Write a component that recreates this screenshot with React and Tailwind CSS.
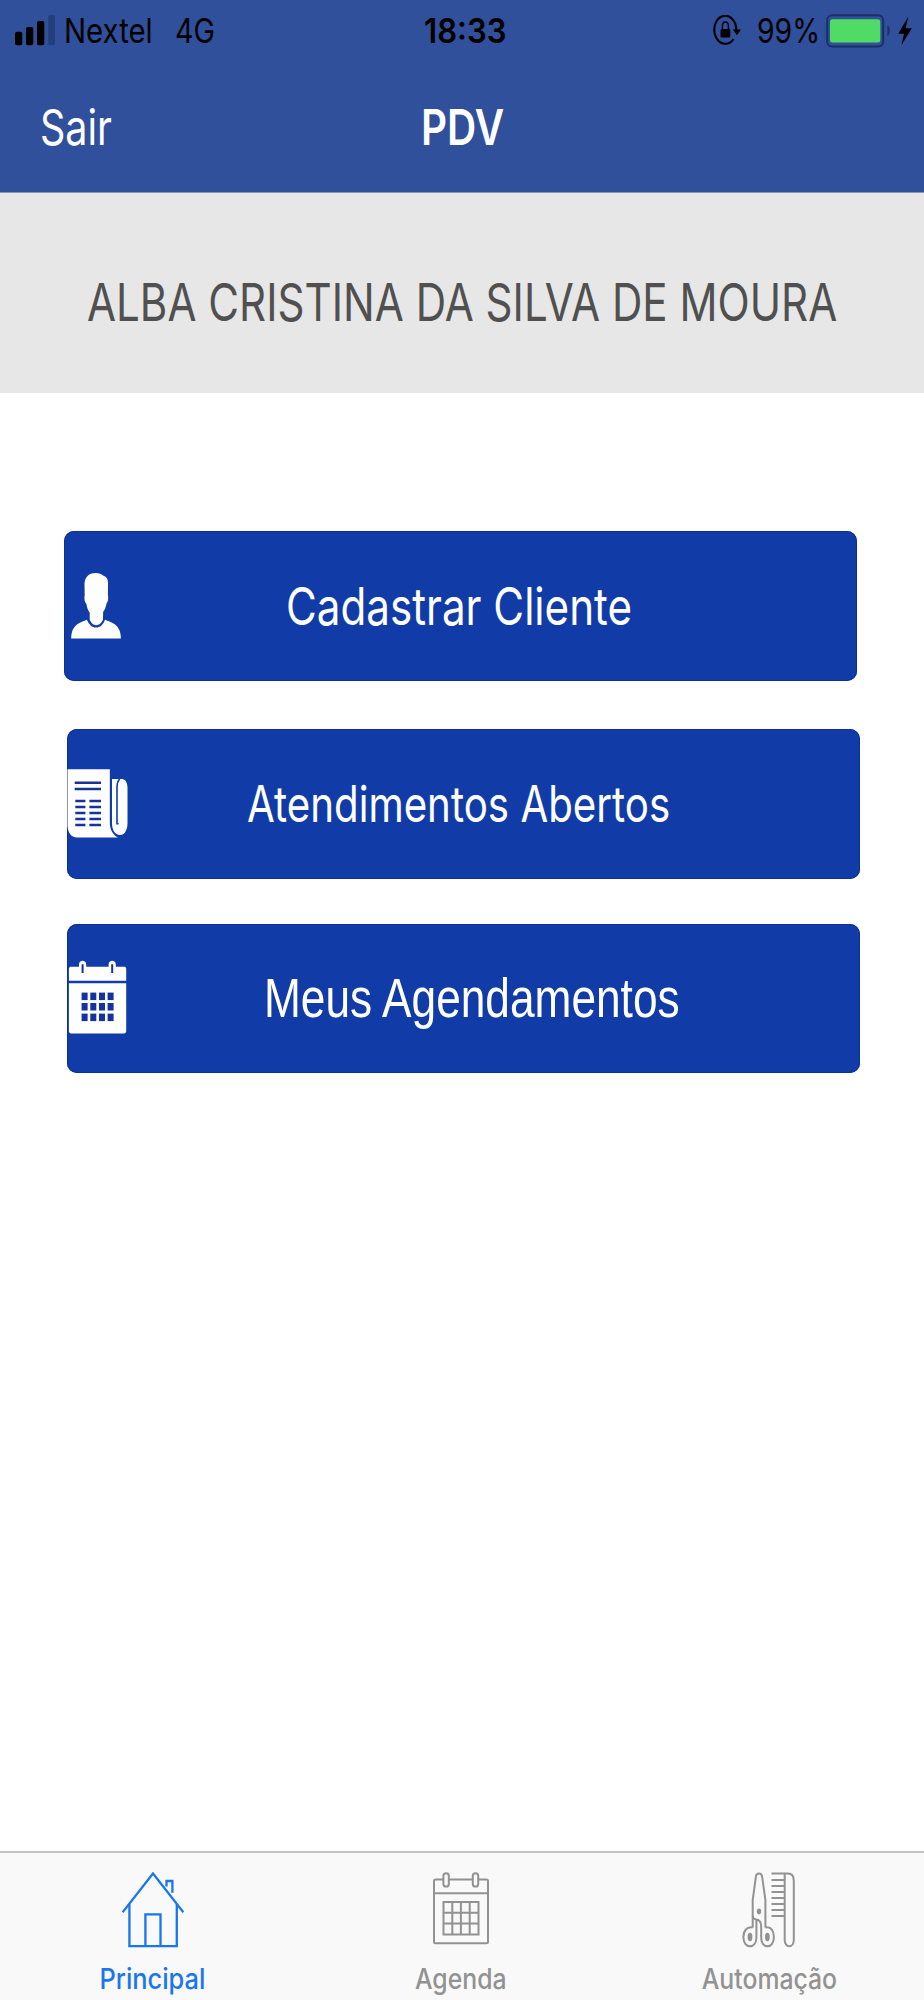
import React, { useState } from 'react';

const SignalIcon = () => (
  <svg className="shrink-0" width="40" height="32" viewBox="0 0 40 32">
    <rect x="0" y="16.7" width="7.3" height="13.5" rx="2" fill="#000" />
    <rect x="11" y="12" width="7.3" height="18.2" rx="2" fill="#000" />
    <rect x="22" y="6" width="7.3" height="24.2" rx="2" fill="#000" />
    <rect x="33.2" y="0" width="7" height="30.2" rx="2" fill="#253f7c" />
  </svg>
);

const RotationLockIcon = () => (
  <svg className="shrink-0" width="28" height="32" viewBox="0 0 28 32">
    <path d="M20.6 24A11 14 0 1 1 23.3 15" fill="none" stroke="#000" strokeWidth="2.1" />
    <path d="M19.8 14.6H28L24 20.3Z" fill="#000" />
    <rect x="7.5" y="14" width="9.8" height="8.6" rx="1" fill="#000" />
    <path d="M9.4 14.5V11C9.4 5.6 15.4 5.6 15.4 11V14.5" fill="none" stroke="#000" strokeWidth="1.4" />
  </svg>
);

const BatteryIcon = () => (
  <svg className="shrink-0" width="64" height="34" viewBox="0 0 64 34">
    <rect x="1.2" y="1.2" width="56" height="31.2" rx="5" fill="none" stroke="#1c2f60" strokeWidth="2" />
    <rect x="4" y="5.2" width="50.3" height="23.2" rx="2.5" fill="#4fdb64" />
    <path d="M61.3 11C65 12.5 65 20.5 61.3 22.3Z" fill="#1f356b" />
  </svg>
);

const BoltIcon = () => (
  <svg className="ml-2 shrink-0" width="14" height="30" viewBox="0 0 14 30">
    <path d="M10.3 .5L.3 17.7H6L3.4 29.2L13.8 12.3H7.7Z" fill="#000" />
  </svg>
);

const PersonIcon = () => (
  <svg className="ml-[7px] shrink-0" width="50" height="66" viewBox="0 0 50 66" fill="#fff">
    <path d="M24.7 0C17.5 0 13.3 4.5 13.5 12L13.7 22C13 25 13.4 29 15.4 31C16 35 17.2 37.5 18.7 39.5V46.3C19.5 49.5 22.3 52.3 25.2 52.3C28.2 52.3 31.2 49.5 32 46.3L32.1 39C34 36.5 35 33.5 35.5 30.5C37.2 28.5 37.6 25 36.9 22L37 10C37 6 35.5 3.8 32.5 2.8C30.5 .9 28 0 24.7 0Z" />
    <path d="M.2 65.6C.2 59 2.2 54.3 6 51.5C9 49.3 13 48 15.9 46.7C18 51.5 21 54.6 25 54.6C29.2 54.6 32.3 51.5 34 46.7C37 48 41 49 44 51.5C48 54.7 49.9 59 49.9 65.6Z" />
  </svg>
);

const NewspaperIcon = () => (
  <svg className="shrink-0" width="61" height="70" viewBox="0 0 61 70">
    <path d="M.5 .3H42.8V53C42.8 61 46 66 51 68.5H10C4 68.5 .5 63 .5 56Z" fill="#fff" />
    <path d="M45 10H52.2C53.5 9.8 54.5 10 55.5 10C58.8 10.7 60.5 14 60.5 19V54C60.5 61.5 57.5 66 53 66C48 66 45 61 45 54Z" fill="#fff" />
    <path d="M52.6 10C50.8 12 50 14.5 50 18V54.8H51.6" fill="none" stroke="#113ca8" strokeWidth="1.6" />
    <path
      d="M7.7 13.8H34M7.7 20H34M8.3 32H18.4M22.4 32H34M8.3 38.1H18.4M22.4 38.1H34M8.3 44H18.4M22.4 44H34M8.3 50H18.4M22.4 50H34M8.3 56H18.4M22.4 56H34"
      stroke="#17329a"
      strokeWidth="2.5"
    />
  </svg>
);

const CalendarSolidIcon = () => (
  <svg className="mb-[3px] ml-px shrink-0" width="59" height="74" viewBox="0 0 59 74" fill="#fff">
    <path d="M.9 20.7V9C.9 7.3 1.7 6.7 3 6.7H11V4.5C11 -.5 18.2 -.5 18.2 4.5V6.7H40.6V4.5C40.6 -.5 47.8 -.5 47.8 4.5V6.7H56C57.4 6.7 58.2 7.3 58.2 9V20.7Z" />
    <path d="M.9 23.2H58.2V71C58.2 72.7 57.4 73.4 56 73.4H3C1.7 73.4 .9 72.7 .9 71Z" />
    <path d="M14.6 4.2V13M44.2 4.2V13" stroke="#17329a" strokeWidth="2" />
    <g fill="#1433a0">
      {[32.6, 43, 53.6].map((y) =>
        [13.6, 22.3, 31, 39.6].map((x) => <rect key={`${x}-${y}`} x={x} y={y} width="6" height="7.5" />)
      )}
    </g>
  </svg>
);

const HomeIcon = () => (
  <svg width="62" height="76" viewBox="0 0 62 76" fill="none" stroke="currentColor" strokeWidth="2.3">
    <path d="M.6 40.3L31 1.5L61.4 40.3" />
    <path d="M7.4 32V74.2H54.8V32" />
    <path d="M23.4 74V42.4H38.5V74" />
    <path d="M44.5 14.5V9H50.4V20.7" />
  </svg>
);

const CalendarIcon = () => (
  <svg width="56" height="76" viewBox="0 0 56 76" fill="none" stroke="currentColor" strokeWidth="2">
    <rect x="1" y="7.5" width="54" height="63.7" rx="1.5" />
    <path d="M1 21.2H55" />
    <rect x="10.4" y="1.2" width="5.4" height="13.3" rx="2.6" fill="#f9f9f9" />
    <rect x="39.8" y="1.2" width="5.4" height="13.3" rx="2.6" fill="#f9f9f9" />
    <path d="M10.5 30H45.5V62.5H10.5ZM10.5 40.7H45.5M10.5 51.5H45.5M19.3 30V62.5M27.9 30V62.5M36.7 30V62.5" />
  </svg>
);

const ScissorsCombIcon = () => (
  <svg width="54" height="76" viewBox="0 0 54 76" fill="none" stroke="currentColor" strokeWidth="2">
    <path d="M10.7 55.6V28L13.9 4.5C14.4 .4 19.6 .4 20.1 4.5L23.4 28V55.6" />
    <path d="M10.7 55.6C5 54.2 1.4 59 1.4 65C1.4 70.8 4.3 74.3 8 74.3C11.8 74.3 14.4 71 14.4 65.5V48" />
    <path d="M23.4 55.6C29.2 54.2 31.9 59 31.9 65C31.9 70.8 29 74.3 25.5 74.3C21.7 74.3 19.2 71 19.2 65.5V54.5C19.2 49.5 17 48 14.4 47.6C12 47.4 10.9 46 10.7 44" />
    <ellipse cx="8" cy="65" rx="2.4" ry="4.2" fill="currentColor" stroke="none" />
    <ellipse cx="25.4" cy="65" rx="2.4" ry="4.2" fill="currentColor" stroke="none" />
    <ellipse cx="17" cy="39.4" rx="2.2" ry="2.8" fill="currentColor" stroke="none" />
    <path d="M29.5 1.6H46C49.8 1.6 51.8 4.5 51.8 9V68C51.8 76.4 42.7 76.4 42.7 68V1.6" />
    <path d="M29.5 8H42.7M29.5 14H42.7M29.5 20H42.7M29.5 26H42.7M29.5 32H42.7M29.5 38H42.7M29.5 44H42.7" strokeWidth="2.2" />
  </svg>
);

const actions = [
  {
    label: 'Cadastrar Cliente',
    icon: PersonIcon,
    box: 'ml-16 h-[150px]',
    text: 'ml-[165px] mt-0.5 text-[52px] scale-x-[0.811]',
  },
  {
    label: 'Atendimentos Abertos',
    icon: NewspaperIcon,
    box: 'mt-12 ml-[67px] h-[150px]',
    text: 'ml-[119px] text-[50px] scale-x-[0.805]',
  },
  {
    label: 'Meus Agendamentos',
    icon: CalendarSolidIcon,
    box: 'mt-[45px] ml-[67px] h-[149px]',
    text: "ml-[137px] mb-px font-['Liberation_Sans',sans-serif] text-[56px] scale-x-[0.79]",
  },
];

const tabs = [
  { id: 'principal', label: 'Principal', icon: HomeIcon, box: 'pr-0.5', text: 'scale-x-[0.906]' },
  { id: 'agenda', label: 'Agenda', icon: CalendarIcon, box: '', text: 'scale-x-[0.885]' },
  { id: 'automacao', label: 'Automação', icon: ScissorsCombIcon, box: 'pl-0.5', text: 'scale-x-[0.885]' },
];

const StatusBar = () => (
  <div className="flex h-[62px] items-center pl-[15px] text-[34px] leading-none whitespace-nowrap text-black">
    <SignalIcon />
    <span className="ml-[9px] w-[111px] shrink-0 origin-left scale-x-[0.863]">Nextel</span>
    <span className="w-[249px] shrink-0 origin-left scale-x-[0.844]">4G</span>
    <span className="w-[289px] shrink-0 origin-left scale-x-[0.913] font-semibold">18:33</span>
    <RotationLockIcon />
    <span className="ml-4 w-[69px] shrink-0 origin-left scale-x-[0.835]">99%</span>
    <BatteryIcon />
    <BoltIcon />
  </div>
);

const App = () => {
  const [activeTab, setActiveTab] = useState('principal');

  return (
    <div className="flex h-[2000px] w-[924px] flex-col overflow-hidden bg-white font-[Inter,sans-serif]">
      {/* Header */}
      <header className="h-[193px] border-b border-[#8d97ac] bg-[#30509b]">
        <StatusBar />
        <div className="flex h-[130px] items-center pl-10 text-[49px] leading-none whitespace-nowrap text-white">
          <button className="w-[381px] shrink-0 origin-left scale-x-[0.806] text-left">Sair</button>
          <h1 className="origin-left scale-x-[0.825] font-semibold">PDV</h1>
        </div>
      </header>

      {/* User name */}
      <div className="flex h-[200px] items-center justify-center bg-[#e7e7e7] pt-[19px]">
        <p className="shrink-0 scale-x-[0.81] text-[52px] leading-none whitespace-nowrap text-[#505050]">
          ALBA CRISTINA DA SILVA DE MOURA
        </p>
      </div>

      {/* Actions */}
      <main className="flex-1 pt-[138px]">
        {actions.map(({ label, icon: Icon, box, text }) => (
          <button
            key={label}
            className={`flex w-[793px] items-center rounded-[10px] bg-[#113ca8] text-white inset-ring inset-ring-[#0c2f9b] ${box}`}
          >
            <Icon />
            <span className={`shrink-0 origin-left leading-none whitespace-nowrap ${text}`}>{label}</span>
          </button>
        ))}
      </main>

      {/* Tab bar */}
      <nav className="flex h-[149px] border-t-2 border-[#c3c3c3] bg-[#f9f9f9] pr-0.5">
        {tabs.map(({ id, label, icon: Icon, box, text }) => (
          <button
            key={id}
            onClick={() => setActiveTab(id)}
            className={`flex w-1/3 flex-col items-center pt-[19px] ${box} ${
              activeTab === id ? 'text-[#1976ee]' : 'text-[#929292]'
            }`}
          >
            <Icon />
            <span className={`mt-[11px] text-[28px] leading-10 font-medium ${text}`}>{label}</span>
          </button>
        ))}
      </nav>
    </div>
  );
};

export default App;
